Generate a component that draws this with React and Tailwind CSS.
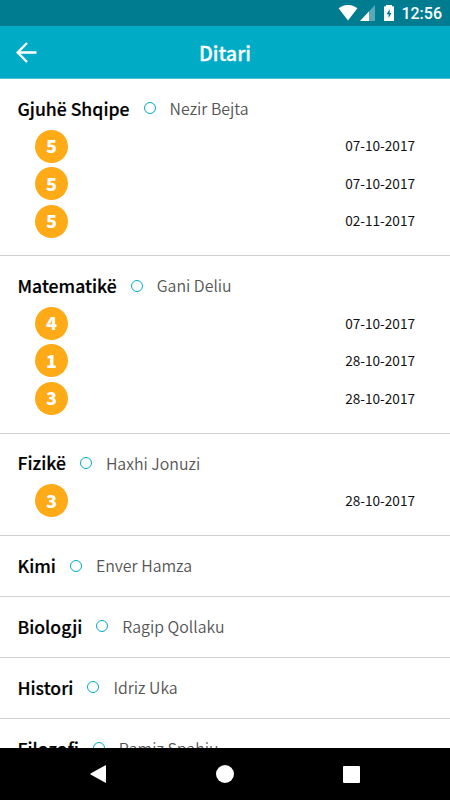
import React from "react";

const subjects = [
  {
    name: "Gjuhë Shqipe",
    teacher: "Nezir Bejta",
    grades: [
      { value: 5, date: "07-10-2017" },
      { value: 5, date: "07-10-2017" },
      { value: 5, date: "02-11-2017" },
    ],
  },
  {
    name: "Matematikë",
    teacher: "Gani Deliu",
    grades: [
      { value: 4, date: "07-10-2017" },
      { value: 1, date: "28-10-2017" },
      { value: 3, date: "28-10-2017" },
    ],
  },
  {
    name: "Fizikë",
    teacher: "Haxhi Jonuzi",
    grades: [{ value: 3, date: "28-10-2017" }],
  },
  { name: "Kimi", teacher: "Enver Hamza", grades: [] },
  { name: "Biologji", teacher: "Ragip Qollaku", grades: [] },
  { name: "Histori", teacher: "Idriz Uka", grades: [] },
  { name: "Filozofi", teacher: "Ramiz Spahiu", grades: [] },
];

function StatusBar() {
  return (
    <div className="flex h-[26px] shrink-0 items-center justify-end bg-[#007c91] pr-2 text-white">
      <svg viewBox="0 0 20 16" className="h-4 w-5" fill="currentColor">
        <path d="M0.6 3.2C6.2-1.1 13.8-1.1 19.4 3.2L10 15.5z" />
      </svg>
      <svg viewBox="0 0 15 16" className="ml-0.5 h-4 w-[15px]" fill="currentColor">
        <path d="M0 16L15 0v16z" opacity="0.35" />
        <path d="M0 16L9 6.4V16z" />
      </svg>
      <svg viewBox="0 0 10 16" className="ml-[9px] h-4 w-2.5" fill="currentColor">
        <path
          fillRule="evenodd"
          d="M2 0h6v1.300h1.300q.7 0 .7.700v13.300q0 .7-.7.700H.7q-.7 0-.7-.7V2q0-.7.7-.7h1.300zM5.700 4L2.600 9.300h2v4L7.400 8H5.700z"
        />
      </svg>
      <span className="ml-[7px] pt-0.5 font-[Roboto] text-base leading-none font-medium">
        12:56
      </span>
    </div>
  );
}

function Header() {
  return (
    <header className="grid h-[53px] shrink-0 grid-cols-[1fr_auto_1fr] items-center border-b border-[#4dc4d6] bg-[#00acc5] text-white">
      <button type="button" aria-label="Back" className="ml-4 w-[21px]">
        <svg
          viewBox="0 0 21 21"
          className="h-[21px] w-[21px]"
          fill="none"
          stroke="currentColor"
          strokeWidth="2.4"
        >
          <path d="M20.500 10.500H2M11 1L1.700 10.500L11 20" />
        </svg>
      </button>
      <h1 className="pt-0.5 text-[19.8px] leading-none font-medium [-webkit-text-stroke:0.3px]">
        Ditari
      </h1>
    </header>
  );
}

function Grade({ value, date }) {
  return (
    <li className="flex h-[33px] items-center justify-between pr-[35px] pl-[35px]">
      <span className="flex h-[33px] w-[33px] items-center justify-center rounded-full bg-[#ffaa17] pb-0.5 text-[18px] leading-none font-black text-white">
        {value}
      </span>
      <span className="text-[13.6px] leading-none text-[#111]">{date}</span>
    </li>
  );
}

function Subject({ name, teacher, grades }) {
  return (
    <section className="shrink-0 border-b border-[#d0d0d0] pt-[16.4px] pb-[17.5px]">
      <div className="flex h-[26px] items-center pl-[17.5px] whitespace-nowrap">
        <h2 className="pt-[0.3px] text-[17.6px] leading-none font-medium text-black [-webkit-text-stroke:0.2px]">
          {name}
        </h2>
        <span className="mx-[14px] h-3 w-3 rounded-full border border-[#00acc5]" />
        <span className="pt-px text-[15.9px] leading-none font-[350] text-[#555]">
          {teacher}
        </span>
      </div>
      {grades.length > 0 && (
        <ul className="flex flex-col gap-[4.5px] pt-[8.2px] pb-[0.3px]">
          {grades.map((grade, i) => (
            <Grade key={i} {...grade} />
          ))}
        </ul>
      )}
    </section>
  );
}

function NavigationBar() {
  return (
    <nav className="flex h-[52px] shrink-0 items-center justify-around bg-black px-9 text-white">
      <svg viewBox="0 0 18 18" className="h-[18px] w-[18px]" fill="currentColor">
        <path d="M16 0.500v17q0 .5-.6.3L.6 9.500q-.6-.5 0-1L15.400.2q.6-.2.600.3z" />
      </svg>
      <span className="h-[18px] w-[18px] rounded-full bg-white" />
      <span className="h-[17px] w-[17px] rounded-[1px] bg-white" />
    </nav>
  );
}

export default function App() {
  return (
    <div className="flex h-[800px] w-[450px] flex-col overflow-hidden bg-white font-['Noto_Sans_CJK_SC',sans-serif]">
      <StatusBar />
      <Header />
      <main className="flex min-h-0 flex-1 flex-col overflow-hidden">
        {subjects.map((subject) => (
          <Subject key={subject.name} {...subject} />
        ))}
      </main>
      <NavigationBar />
    </div>
  );
}
